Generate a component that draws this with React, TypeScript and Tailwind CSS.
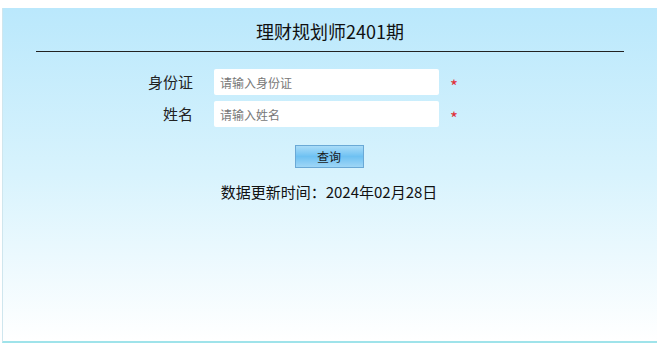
export default function App() {
  return (
    <div
      className="w-[657px] h-[343px] bg-white pt-2 pl-[2px]"
      style={{ fontFamily: '"Microsoft YaHei", "Noto Sans CJK SC", sans-serif' }}
    >
      <div className="h-[335px] border-l border-l-[#cfe6ee] border-b-2 border-b-[#9fe3ea] bg-gradient-to-b from-[#bae8fc] via-[#d8f3fd] to-white">
        <div className="pt-[11px] text-center text-[18px] leading-[24px] text-[#111]">理财规划师2401期</div>
        <div className="mx-[33px] mt-[8px] h-[1px] bg-[#222]" />
        <div className="mt-[17px] flex flex-col gap-[6px]">
          <Row label="身份证" placeholder="请输入身份证" />
          <Row label="姓名" placeholder="请输入姓名" />
        </div>
        <div className="mt-[18px] flex justify-center pr-[2px]">
          <button className="w-[69px] h-[23px] border border-[#6aa9d6] bg-gradient-to-b from-[#a9dcf8] via-[#6ec1f2] to-[#9ed6f6] text-[12px] text-[#1a1a1a] leading-[20px]">
            查询
          </button>
        </div>
        <div className="mt-[13px] text-center text-[15px] leading-[22px] text-[#111] pr-[2px]">
          数据更新时间：2024年02月28日
        </div>
      </div>
    </div>
  );
}

function Row({ label, placeholder }: { label: string; placeholder: string }) {
  return (
    <div className="flex items-center h-[26px]">
      <div className="w-[190px] text-right text-[15px] text-[#222]">{label}</div>
      <input
        readOnly
        placeholder={placeholder}
        className="ml-[21px] w-[225px] h-[26px] px-[6px] bg-white rounded-[2px] text-[12px] placeholder:text-[#777] outline-none"
      />
      <span className="ml-[11px] mt-[6px] text-[#e0303a] text-[17px] leading-none">*</span>
    </div>
  );
}
